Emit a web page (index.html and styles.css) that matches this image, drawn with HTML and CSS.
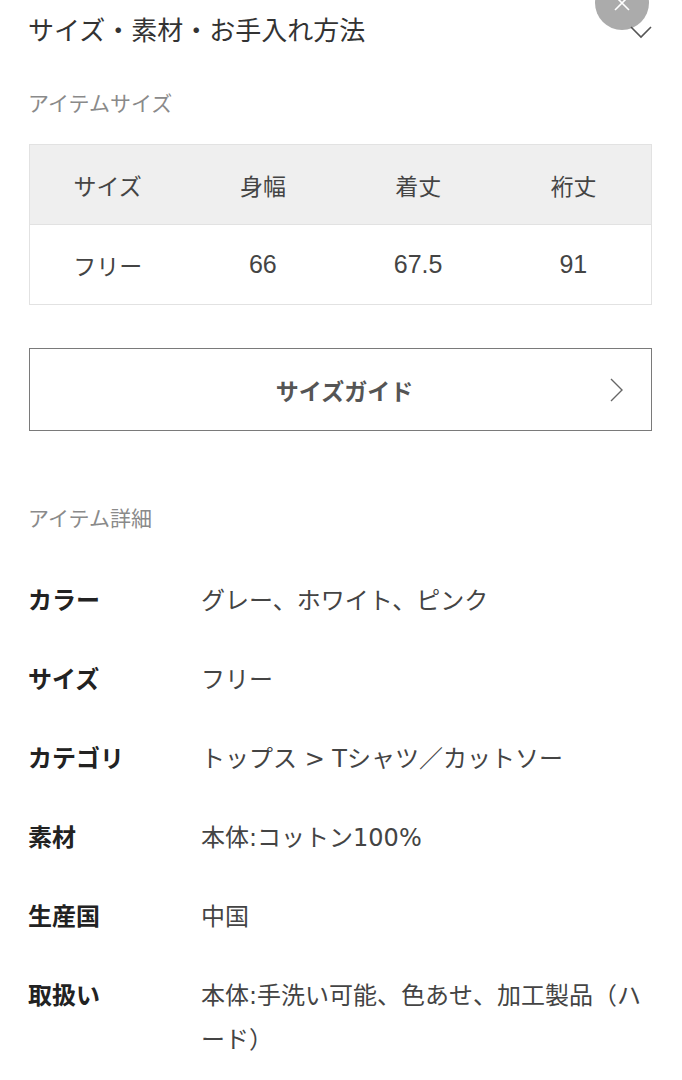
FILE: index.html
```html
<!DOCTYPE html>
<html lang="ja">
<head>
<meta charset="utf-8">
<link rel="stylesheet" href="styles.css">
</head>
<body>
<div class="page">
  <div class="acc-head">
    <h2 class="acc-title">サイズ・素材・お手入れ方法</h2>
    <svg class="chev-down" width="22" height="13" viewBox="0 0 22 13"><polyline points="1,1 11,11 21,1" fill="none" stroke="#555" stroke-width="1.6"/></svg>
  </div>

  <div class="section-label first">アイテムサイズ</div>

  <div class="size-table">
    <div class="row head">
      <div class="cell">サイズ</div>
      <div class="cell">身幅</div>
      <div class="cell">着丈</div>
      <div class="cell">裄丈</div>
    </div>
    <div class="row">
      <div class="cell">フリー</div>
      <div class="cell num">66</div>
      <div class="cell num">67.5</div>
      <div class="cell num">91</div>
    </div>
  </div>

  <div class="guide-btn">
    <span></span>
    <span class="guide-text">サイズガイド</span>
    <svg class="chev-right" width="13" height="24" viewBox="0 0 13 24"><polyline points="1,1 12,12 1,23" fill="none" stroke="#666" stroke-width="1.4"/></svg>
  </div>

  <div class="section-label second">アイテム詳細</div>

  <dl class="details">
    <div class="drow"><dt>カラー</dt><dd>グレー、ホワイト、ピンク</dd></div>
    <div class="drow"><dt>サイズ</dt><dd>フリー</dd></div>
    <div class="drow"><dt>カテゴリ</dt><dd>トップス &gt; Tシャツ／カットソー</dd></div>
    <div class="drow"><dt>素材</dt><dd>本体:コットン100%</dd></div>
    <div class="drow"><dt>生産国</dt><dd>中国</dd></div>
    <div class="drow"><dt>取扱い</dt><dd>本体:手洗い可能、色あせ、加工製品（ハード）</dd></div>
  </dl>
</div>

<div class="close-btn">
  <svg width="20" height="20" viewBox="0 0 20 20"><path d="M3 3 L17 17 M17 3 L3 17" stroke="#fff" stroke-width="1.6" fill="none"/></svg>
</div>
</body>
</html>
```

FILE: styles.css
```css
html, body {
  margin: 0;
  padding: 0;
  background: #fff;
}
body {
  font-family: "Liberation Sans", "Noto Sans CJK JP", sans-serif;
  color: #333;
  overflow: hidden;
}
.page {
  padding: 0 30px 0 29px;
}
.acc-head {
  display: flex;
  align-items: center;
  justify-content: space-between;
  height: 62px;
}
.acc-title {
  margin: 0 0 0 -1px;
  font-size: 26px;
  font-weight: normal;
  line-height: 62px;
  color: #333;
}
.chev-down {
  margin-top: 2px;
  position: relative;
  z-index: 2;
}
.section-label {
  font-size: 21px;
  line-height: 30px;
  color: #8a8a8a;
  margin-left: -1px;
}
.section-label.first {
  margin-top: 27px;
}
.section-label.second {
  margin-top: 73px;
}
.size-table {
  margin-top: 25px;
  border: 1px solid #e2e2e2;
}
.row {
  display: grid;
  grid-template-columns: repeat(4, 1fr);
  height: 79px;
  align-items: center;
}
.row.head {
  background: #efefef;
  border-bottom: 1px solid #e2e2e2;
}
.cell {
  text-align: center;
  font-size: 23px;
  color: #444;
}
.cell.num {
  font-size: 25px;
}
.guide-btn {
  margin-top: 43px;
  height: 81px;
  border: 1px solid #7a7a7a;
  display: grid;
  grid-template-columns: 1fr auto 1fr;
  align-items: center;
}
.guide-text {
  font-size: 23px;
  font-weight: bold;
  color: #555;
  padding-left: 8px;
}
.chev-right {
  justify-self: end;
  margin-right: 28px;
}
.details {
  margin: 45px 0 0;
  display: flex;
  flex-direction: column;
  gap: 35px;
}
.drow {
  display: flex;
}
.drow dt {
  width: 173px;
  flex: none;
  margin-left: -1px;
  font-size: 24px;
  font-weight: bold;
  line-height: 44px;
  color: #222;
}
.drow dd {
  margin: 0;
  flex: 1;
  font-family: "DejaVu Sans", "Noto Sans CJK JP", sans-serif;
  font-size: 24px;
  line-height: 44px;
  color: #444;
}
.close-btn {
  position: absolute;
  left: 595px;
  top: -24px;
  width: 54px;
  height: 54px;
  border-radius: 50%;
  background: rgba(150, 150, 150, 0.8);
  display: flex;
  align-items: center;
  justify-content: center;
}
```
